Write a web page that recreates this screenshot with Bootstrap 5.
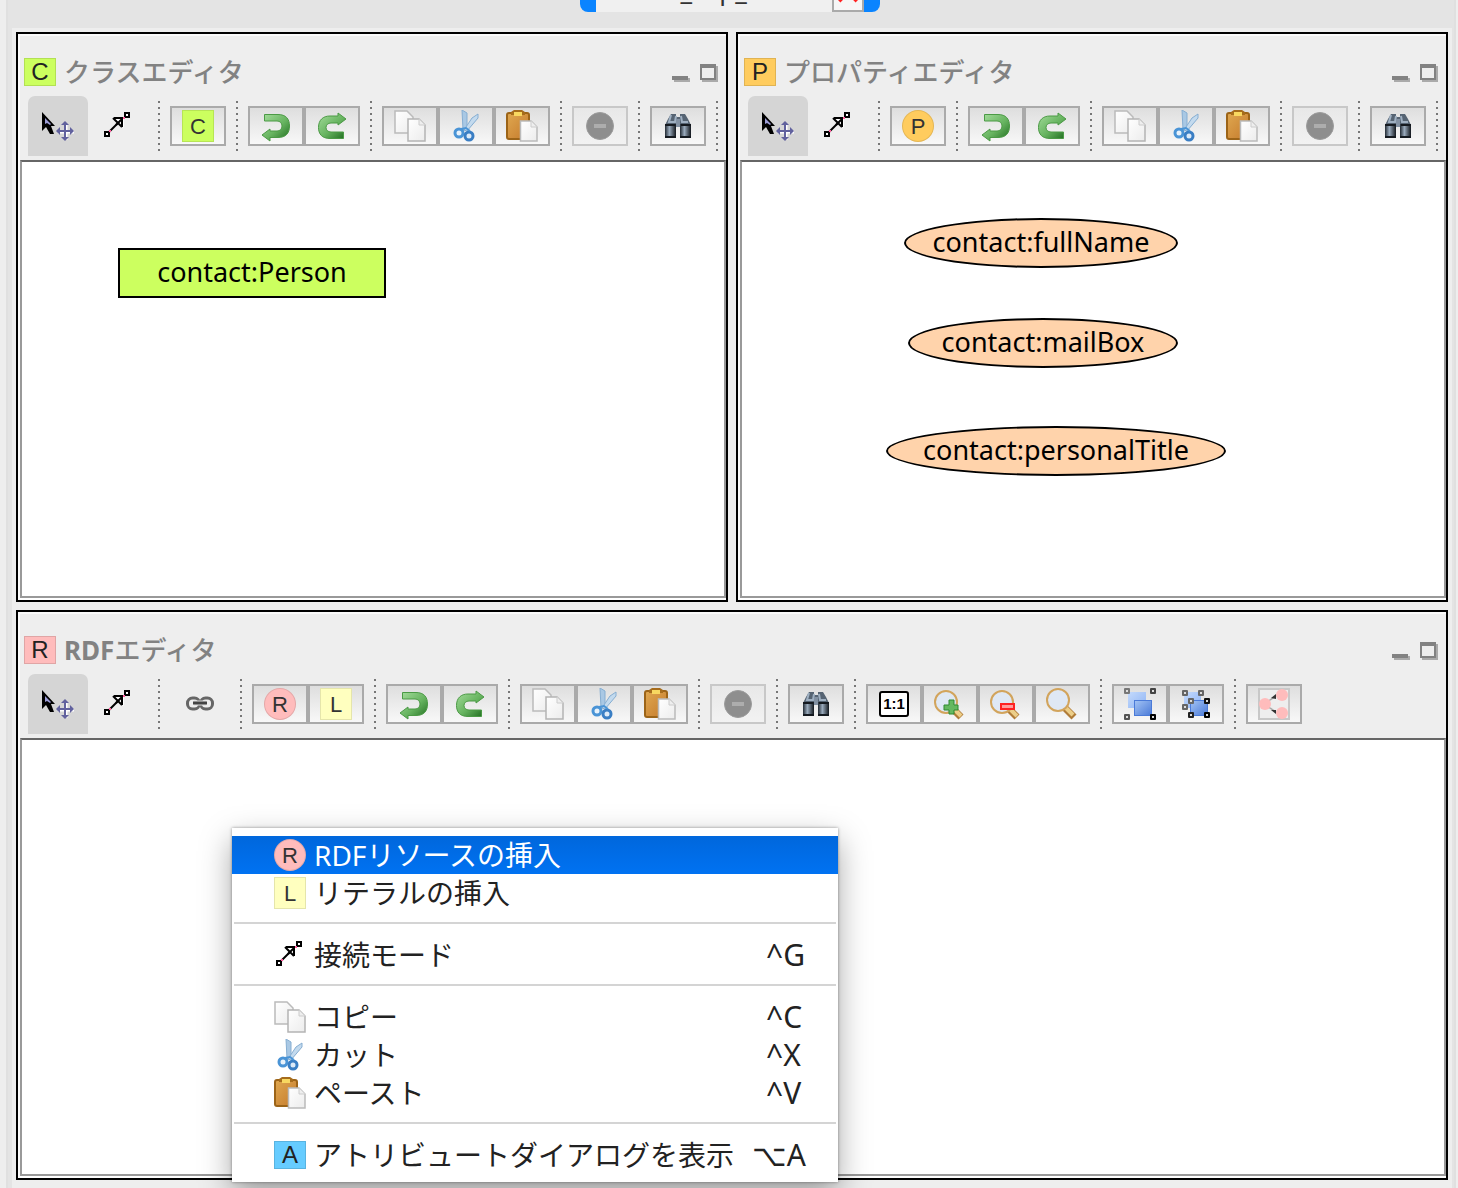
<!DOCTYPE html>
<html lang="ja">
<head>
<meta charset="utf-8">
<meta name="viewport" content="width=device-width, initial-scale=1">
<title>RDFエディタ</title>
<link href="https://cdn.jsdelivr.net/npm/bootstrap@5.3.0/dist/css/bootstrap.min.css" rel="stylesheet">
<style>
  body { background: #eee; font-family: "Noto Sans", "Noto Sans CJK JP", sans-serif; color: #000; overflow: hidden; }
  .desk { margin: 0 2px 0 6px; border: solid #e0e0e0; border-width: 0 2px; padding: 0 2px 0 4px; background: #e4e4e4; }
  .desk-top { height: 28px; padding-right: 4px; }
  .doc-tab { height: 40px; margin-top: -28px; width: 300px; background: #f0f0f0; border-radius: 8px; overflow: hidden; font-size: 26px; line-height: 36px; color: #333; }
  .tab-cap { width: 16px; background: #0a84ff; }
  .tab-close { width: 32px; border: 2px solid #aaa; background: #f6f6f6; }
  .desk-body { background: #eee; padding: 4px 4px 8px; gap: 8px; }
  .pane-row { gap: 8px; flex: 1 1 0; }
  .pane { border: 2px solid #000; background: #eee; box-shadow: inset 2px 2px 0 #fafafa, inset 0 -2px 0 #fff; flex: 1 1 0; min-width: 0; }
  .pane-head { height: 62px; padding: 14px 8px 0 6px; }
  .pane-title { font-size: 26px; line-height: 32px; font-weight: 700; color: #828282; padding-left: 8px; }
  .jp-title { font-weight: 500; }
  .win-btns { gap: 10px; padding-top: 2px; }
  .win-btns button { border: 0; background: none; padding: 0; line-height: 0; }
  .tag { display: inline-block; width: 32px; height: 28px; font: 24px/26px "Liberation Sans", sans-serif; text-align: center; border: 1px solid rgba(0,0,0,.12); color: #222; }
  .tag-tall { height: 32px; font-size: 22px; line-height: 32px; color: #333; border-color: rgba(0,0,0,.1); }
  .tag-c { background: #ccff5f; } .tag-p { background: #ffcc5e; } .tag-r { background: #ffbcbc; } .tag-l { background: #ffffbf; } .tag-a { background: #66ccff; }
  .tag-one { display: inline-block; width: 30px; height: 26px; border: 2px solid #000; border-radius: 3px; background: #fff; font: 700 15px/22px "Liberation Sans", sans-serif; text-align: center; color: #000; }
  .tool-bar { height: 64px; padding: 0 0 4px 10px; border: 0; }
  .tool { width: 56px; height: 40px; padding: 0; border: 2px solid #aaa; border-radius: 0; background: linear-gradient(#dedede, #f8f8f8); display: flex; align-items: center; justify-content: center; }
  .tool:disabled { border-color: #c8c8c8; background: linear-gradient(#e8e8e8, #f2f2f2); opacity: 1; }
  .tool-flat { width: 60px; height: 60px; border: 0; background: none; }
  .tool-flat.active { background: #d5d5d5; border-radius: 7px 7px 0 0; }
  .tool-sep { width: 2px; height: 50px; margin: 0 10px; background: repeating-linear-gradient(#777 0 2px, transparent 2px 6px); }
  .board { background: #fff; border: 2px solid #999; border-top-color: #666; margin: 0 0 2px 2px; }
  .node { position: absolute; height: 50px; line-height: 44px; font-size: 27px; text-align: center; border: 2px solid #000; white-space: nowrap; }
  .node-class { background: #ccff5f; }
  .node-prop { background: #ffd3ab; border-radius: 50%; }
  .ctx { position: absolute; left: 210px; top: 88px; width: 606px; padding: 8px 0; border: 0; border-radius: 0; box-shadow: 0 0 3px rgba(0,0,0,.4), 0 12px 30px rgba(0,0,0,.35); font-size: 28px; color: #000; }
  .ctx .dropdown-item { height: 38px; padding: 0 32px 0 42px; gap: 8px; line-height: 38px; color: #222; font-weight: 400; }
  .ctx .dropdown-item.active { color: #fff; background: linear-gradient(#0067dc, #0072f2); }
  .ctx .dropdown-divider { margin: 10px 2px 12px; border-top: 2px solid #d4d4d4; opacity: 1; }
  .keys { min-width: 40px; font-size: 30px; }
  .keys, .ctx .word { white-space: nowrap; }
</style>
<script src="https://cdn.jsdelivr.net/npm/bootstrap@5.3.0/dist/js/bootstrap.bundle.min.js"></script>
</head>
<body>
<svg width="0" height="0" class="position-absolute" aria-hidden="true">
  <defs>
    <linearGradient id="green" x1="0" y1="0" x2="1" y2="1"><stop offset="0" stop-color="#a5dd9c"/><stop offset=".55" stop-color="#66b35f"/><stop offset="1" stop-color="#1e6b1e"/></linearGradient>
    <linearGradient id="paper" x1="0" y1="0" x2="1" y2="1"><stop offset="0" stop-color="#fff"/><stop offset="1" stop-color="#ececec"/></linearGradient>
    <linearGradient id="wood" x1="0" y1="0" x2="1" y2="1"><stop offset="0" stop-color="#e0a850"/><stop offset="1" stop-color="#c47a2c"/></linearGradient>
    <linearGradient id="blueA" x1="0" y1="0" x2="1" y2="1"><stop offset="0" stop-color="#c4dafc"/><stop offset="1" stop-color="#8fb4f4"/></linearGradient>
    <linearGradient id="blueB" x1="0" y1="0" x2="1" y2="1"><stop offset="0" stop-color="#a4c4f4"/><stop offset="1" stop-color="#4a7ad8"/></linearGradient>
    <linearGradient id="steel" x1="0" y1="0" x2="1" y2="0"><stop offset="0" stop-color="#222a33"/><stop offset=".4" stop-color="#9aabbd"/><stop offset="1" stop-color="#11161c"/></linearGradient>
    <g id="dot"><rect x="-3" y="-3" width="6" height="6" rx="1"/><rect x="-1" y="-1" width="2" height="2" fill="#ddd"/></g>
  </defs>
  <symbol id="i-select" viewBox="0 0 32 32"><path d="M0 2V21L4 17L8 24H12L9 16H13Z" fill="#000"/><path d="M3 8V14L5 13L8 15L9 14Z" fill="#9c9cd6"/><path d="M24 14V30M16 22H32" stroke="#fff" stroke-width="3"/><path d="M23 13V29M15 21H31" stroke="#62629e" stroke-width="2"/><path d="M19 15L23 11L27 15ZM19 27L23 31L27 27ZM18 17L14 21L18 25ZM28 17L32 21L28 25Z" fill="#62629e"/></symbol>
  <symbol id="i-connect" viewBox="0 0 32 32"><path d="M7 22L20 9" stroke="#000" stroke-width="2"/><path d="M12 7H22V18L19 15L15 11Z" fill="#fff"/><path d="M12 8H20V17M11 8L20 17M14 15L20 9" fill="none" stroke="#000" stroke-width="2"/><path d="M3 22H7V26H3ZM23 3H27V7H23Z" fill="#fff" stroke="#000" stroke-width="2"/><path d="M7 20h2v2H7zM21 7h2v2h-2z" fill="#ff5c9c"/></symbol>
  <symbol id="i-undo" viewBox="0 0 32 32"><path d="M4.500 4.500H18C26 4.500 29.500 9 29.500 16C29.500 23 26 27.500 18 27.500H10V31L2 25L10 19V21H17C20 21 22 19 22 16C22 13 20 11 17 11H4.500Z" fill="url(#green)" stroke="#4b9a45"/></symbol>
  <symbol id="i-redo" viewBox="0 0 32 32"><path d="M27.500 28.500H14C6 28.500 2.500 24 2.500 17.500C2.500 10 7 6 14 6H22V3L30 9L22 15V13H15C12 13 10 15 10 17.500C10 20 12 22 15 22H27.500Z" fill="url(#green)" stroke="#4b9a45"/></symbol>
  <symbol id="i-copy" viewBox="0 0 32 32"><path d="M1 1H13L19 7V23H1Z" fill="url(#paper)" stroke="#bbb" stroke-width="1.500"/><path d="M14 9H25L31 15V31H14Z" fill="url(#paper)" stroke="#b4b4b4" stroke-width="1.500"/><path d="M25 9V15H31" fill="#eee" stroke="#ccc"/></symbol>
  <symbol id="i-cut" viewBox="0 0 32 32"><path d="M12 0L17 3V20H13Z" fill="#a9c8e4" stroke="#86aed2"/><path d="M28 4V8L17 21L14 20L22 8Z" fill="#c3daee" stroke="#86aed2"/><circle cx="9" cy="23" r="4" fill="#e8f2fb" stroke="#4a94d6" stroke-width="3"/><circle cx="19" cy="26" r="4" fill="#dceaf8" stroke="#3a7ec4" stroke-width="3"/><path d="M11 19L16 18L20 21" stroke="#4a94d6" stroke-width="2" fill="none"/></symbol>
  <symbol id="i-paste" viewBox="0 0 32 32"><rect x="1" y="3" width="22" height="26" rx="2" fill="url(#wood)" stroke="#9c6418" stroke-width="2"/><path d="M5 5V2L8 0H16L19 2V5Z" fill="#a66c1c"/><path d="M8 2H16V6H8Z" fill="#f8d860"/><path d="M14.500 11H25L31 17V31H14.500Z" fill="url(#paper)" stroke="#bbb" stroke-width="1.500"/><path d="M25 11V17H31" fill="#eee" stroke="#ccc"/></symbol>
  <symbol id="i-minus" viewBox="0 0 32 32"><circle cx="16" cy="16" r="13.500" fill="#8e8e8e" stroke="#9c9c9c"/><path d="M10 14H22V18H10Z" fill="#adadad"/></symbol>
  <symbol id="i-find" viewBox="0 0 32 32"><path d="M9 4H14V7H18V4H23L26 9L29 15H3L6 9Z" fill="#566473"/><path d="M9 5L7 12H13L14 6M19 6L20 12H26" stroke="#9fb0c2" stroke-width="2" fill="none"/><rect x="3" y="14" width="11" height="14" fill="url(#steel)"/><rect x="18" y="14" width="11" height="14" fill="url(#steel)"/><rect x="14" y="9" width="4" height="8" fill="#8291a3"/><path d="M3 26H14V28H3ZM18 26H29V28H18ZM3 14H13V16H3ZM19 14H29V16H19Z" fill="#151a20"/></symbol>
  <symbol id="i-zin" viewBox="0 0 32 32"><path d="M19 21L27 29" stroke="#b07c38" stroke-width="7"/><path d="M19 20L27 28" stroke="#ecce88" stroke-width="4"/><circle cx="12" cy="14" r="11" fill="#dfe8f4" stroke="#d2a45c" stroke-width="2"/><path d="M15 12H20V17H24V22H20V26H15V22H10V17H15Z" fill="#64b860" stroke="#2e8a30"/></symbol>
  <symbol id="i-zout" viewBox="0 0 32 32"><path d="M19 21L27 29" stroke="#b07c38" stroke-width="7"/><path d="M19 20L27 28" stroke="#ecce88" stroke-width="4"/><circle cx="12" cy="14" r="11" fill="#dfe8f4" stroke="#d2a45c" stroke-width="2"/><rect x="11" y="16" width="13" height="5" fill="#ff9c9c" stroke="#f22" stroke-width="2"/></symbol>
  <symbol id="i-zoom" viewBox="0 0 32 32"><path d="M19 20L28 29" stroke="#b07c38" stroke-width="7"/><path d="M19 19L27 27" stroke="#ecce88" stroke-width="4"/><circle cx="12" cy="12" r="11" fill="#dfe8f4" stroke="#d2a45c" stroke-width="2"/></symbol>
  <symbol id="i-group" viewBox="0 0 32 32"><rect x="4" y="4" width="18" height="16" fill="url(#blueA)"/><rect x="10.500" y="12.500" width="17" height="15" fill="url(#blueB)" stroke="#4a7ad8"/><use href="#dot" x="3" y="3" fill="#777"/><use href="#dot" x="29" y="3" fill="#444"/><use href="#dot" x="3" y="29" fill="#555"/><use href="#dot" x="29" y="29"/></symbol>
  <symbol id="i-ungroup" viewBox="0 0 32 32"><rect x="4" y="4" width="17" height="16" fill="url(#blueA)"/><rect x="10.500" y="12.500" width="17" height="15" fill="url(#blueB)" stroke="#4a7ad8"/><g fill="#666"><use href="#dot" x="5" y="5"/><use href="#dot" x="21" y="5"/><use href="#dot" x="5" y="19"/><use href="#dot" x="11" y="13"/></g><use href="#dot" x="27" y="13" fill="#111"/><use href="#dot" x="11" y="27" fill="#222"/><use href="#dot" x="27" y="27"/></symbol>
  <symbol id="i-graph" viewBox="0 0 32 32"><rect x="1" y="1" width="30" height="30" fill="#eee" stroke="#c8c8c8" stroke-width="2"/><path d="M9 14L18 8M9 18L18 24" stroke="#aaa" stroke-width="1.500"/><path d="M18 6V11L13 10ZM18 26V22L13 22Z" fill="#333"/><g fill="#ffbcbc"><circle cx="7" cy="16" r="6"/><circle cx="24" cy="7" r="6"/><circle cx="24" cy="25" r="6"/></g></symbol>
  <symbol id="i-link" viewBox="0 0 32 32"><g fill="none" stroke="#666" stroke-width="3"><rect x="3.500" y="10" width="12" height="11" rx="5"/><rect x="16.500" y="10" width="12" height="11" rx="5"/></g><path d="M10 15H22" stroke="#ddd" stroke-width="5"/><path d="M9 15H23" stroke="#444" stroke-width="3"/></symbol>
  <symbol id="i-min" viewBox="0 0 18 18"><path d="M2 14H18V18H2Z" fill="#aaa"/><path d="M0 12H16V16H0Z" fill="#828282"/></symbol>
  <symbol id="i-max" viewBox="0 0 18 18"><path d="M4 16H16V2H18V18H2V16Z" fill="#aaa"/><path fill-rule="evenodd" d="M0 0H16V16H0ZM2 4V14H14V4Z" fill="#828282"/></symbol>
</svg>

<div class="desk vh-100 d-flex flex-column">
  <header class="desk-top d-flex justify-content-center align-items-start overflow-hidden">
    <div class="doc-tab d-flex">
      <span class="tab-cap"></span>
      <span class="flex-grow-1 ps-1">screen_cap_02</span>
      <button class="tab-close p-0" aria-label="閉じる"><svg width="28" height="36" viewBox="0 0 28 36" class="d-block"><path d="M5 9L23 27M23 9L5 27" stroke="#f22" stroke-width="4"/></svg></button>
      <span class="tab-cap"></span>
    </div>
  </header>

  <main class="desk-body flex-grow-1 d-flex flex-column">
    <div class="pane-row d-flex">
      <section class="pane d-flex flex-column">
        <div class="pane-head d-flex align-items-center">
          <span class="tag tag-c">C</span>
          <h2 class="pane-title jp-title m-0 me-auto">クラスエディタ</h2>
          <div class="win-btns d-flex"><button aria-label="最小化"><svg width="18" height="18"><use href="#i-min"/></svg></button><button aria-label="最大化"><svg width="18" height="18"><use href="#i-max"/></svg></button></div>
        </div>
        <div class="tool-bar d-flex align-items-center" role="toolbar">
          <button class="tool tool-flat active" aria-label="選択"><svg width="32" height="32"><use href="#i-select"/></svg></button>
          <button class="tool tool-flat" aria-label="接続"><svg width="32" height="32"><use href="#i-connect"/></svg></button>
          <span class="tool-sep"></span>
          <button class="tool"><span class="tag tag-tall tag-c">C</span></button>
          <span class="tool-sep"></span>
          <button class="tool" aria-label="元に戻す"><svg width="32" height="32"><use href="#i-undo"/></svg></button>
          <button class="tool" aria-label="やり直し"><svg width="32" height="32"><use href="#i-redo"/></svg></button>
          <span class="tool-sep"></span>
          <button class="tool" aria-label="コピー"><svg width="32" height="32"><use href="#i-copy"/></svg></button>
          <button class="tool" aria-label="カット"><svg width="32" height="32"><use href="#i-cut"/></svg></button>
          <button class="tool" aria-label="ペースト"><svg width="32" height="32"><use href="#i-paste"/></svg></button>
          <span class="tool-sep"></span>
          <button class="tool" aria-label="削除" disabled><svg width="32" height="32"><use href="#i-minus"/></svg></button>
          <span class="tool-sep"></span>
          <button class="tool" aria-label="検索"><svg width="32" height="32"><use href="#i-find"/></svg></button>
          <span class="tool-sep me-0"></span>
        </div>
        <div class="board position-relative flex-grow-1">
          <div class="node node-class" style="left:96px;top:86px;width:268px">contact:Person</div>
        </div>
      </section>

      <section class="pane d-flex flex-column">
        <div class="pane-head d-flex align-items-center">
          <span class="tag tag-p">P</span>
          <h2 class="pane-title jp-title m-0 me-auto">プロパティエディタ</h2>
          <div class="win-btns d-flex"><button aria-label="最小化"><svg width="18" height="18"><use href="#i-min"/></svg></button><button aria-label="最大化"><svg width="18" height="18"><use href="#i-max"/></svg></button></div>
        </div>
        <div class="tool-bar d-flex align-items-center" role="toolbar">
          <button class="tool tool-flat active" aria-label="選択"><svg width="32" height="32"><use href="#i-select"/></svg></button>
          <button class="tool tool-flat" aria-label="接続"><svg width="32" height="32"><use href="#i-connect"/></svg></button>
          <span class="tool-sep"></span>
          <button class="tool"><span class="tag tag-tall tag-p rounded-circle">P</span></button>
          <span class="tool-sep"></span>
          <button class="tool" aria-label="元に戻す"><svg width="32" height="32"><use href="#i-undo"/></svg></button>
          <button class="tool" aria-label="やり直し"><svg width="32" height="32"><use href="#i-redo"/></svg></button>
          <span class="tool-sep"></span>
          <button class="tool" aria-label="コピー"><svg width="32" height="32"><use href="#i-copy"/></svg></button>
          <button class="tool" aria-label="カット"><svg width="32" height="32"><use href="#i-cut"/></svg></button>
          <button class="tool" aria-label="ペースト"><svg width="32" height="32"><use href="#i-paste"/></svg></button>
          <span class="tool-sep"></span>
          <button class="tool" aria-label="削除" disabled><svg width="32" height="32"><use href="#i-minus"/></svg></button>
          <span class="tool-sep"></span>
          <button class="tool" aria-label="検索"><svg width="32" height="32"><use href="#i-find"/></svg></button>
          <span class="tool-sep me-0"></span>
        </div>
        <div class="board position-relative flex-grow-1">
          <div class="node node-prop" style="left:162px;top:56px;width:274px">contact:fullName</div>
          <div class="node node-prop" style="left:166px;top:156px;width:270px">contact:mailBox</div>
          <div class="node node-prop" style="left:144px;top:264px;width:340px">contact:personalTitle</div>
        </div>
      </section>
    </div>

    <div class="pane-row d-flex">
      <section class="pane d-flex flex-column">
        <div class="pane-head d-flex align-items-center">
          <span class="tag tag-r">R</span>
          <h2 class="pane-title m-0 me-auto">RDF<span class="jp-title">エディタ</span></h2>
          <div class="win-btns d-flex"><button aria-label="最小化"><svg width="18" height="18"><use href="#i-min"/></svg></button><button aria-label="最大化"><svg width="18" height="18"><use href="#i-max"/></svg></button></div>
        </div>
        <div class="tool-bar d-flex align-items-center" role="toolbar">
          <button class="tool tool-flat active" aria-label="選択"><svg width="32" height="32"><use href="#i-select"/></svg></button>
          <button class="tool tool-flat" aria-label="接続"><svg width="32" height="32"><use href="#i-connect"/></svg></button>
          <span class="tool-sep"></span>
          <button class="tool tool-flat" aria-label="リンク"><svg width="32" height="32"><use href="#i-link"/></svg></button>
          <span class="tool-sep"></span>
          <button class="tool"><span class="tag tag-tall tag-r rounded-circle">R</span></button>
          <button class="tool"><span class="tag tag-tall tag-l">L</span></button>
          <span class="tool-sep"></span>
          <button class="tool" aria-label="元に戻す"><svg width="32" height="32"><use href="#i-undo"/></svg></button>
          <button class="tool" aria-label="やり直し"><svg width="32" height="32"><use href="#i-redo"/></svg></button>
          <span class="tool-sep"></span>
          <button class="tool" aria-label="コピー"><svg width="32" height="32"><use href="#i-copy"/></svg></button>
          <button class="tool" aria-label="カット"><svg width="32" height="32"><use href="#i-cut"/></svg></button>
          <button class="tool" aria-label="ペースト"><svg width="32" height="32"><use href="#i-paste"/></svg></button>
          <span class="tool-sep"></span>
          <button class="tool" aria-label="削除" disabled><svg width="32" height="32"><use href="#i-minus"/></svg></button>
          <span class="tool-sep"></span>
          <button class="tool" aria-label="検索"><svg width="32" height="32"><use href="#i-find"/></svg></button>
          <span class="tool-sep"></span>
          <button class="tool"><span class="tag-one">1:1</span></button>
          <button class="tool" aria-label="拡大"><svg width="32" height="32"><use href="#i-zin"/></svg></button>
          <button class="tool" aria-label="縮小"><svg width="32" height="32"><use href="#i-zout"/></svg></button>
          <button class="tool" aria-label="全体表示"><svg width="32" height="32"><use href="#i-zoom"/></svg></button>
          <span class="tool-sep"></span>
          <button class="tool" aria-label="グループ化"><svg width="32" height="32"><use href="#i-group"/></svg></button>
          <button class="tool" aria-label="グループ解除"><svg width="32" height="32"><use href="#i-ungroup"/></svg></button>
          <span class="tool-sep"></span>
          <button class="tool" aria-label="グラフ"><svg width="32" height="32"><use href="#i-graph"/></svg></button>
        </div>
        <div class="board position-relative flex-grow-1">
          <div class="ctx dropdown-menu show" role="menu">
            <button class="dropdown-item active d-flex align-items-center" role="menuitem"><span class="tag tag-tall tag-r rounded-circle">R</span><span class="word me-auto">RDFリソースの挿入</span></button>
            <button class="dropdown-item d-flex align-items-center" role="menuitem"><span class="tag tag-tall tag-l">L</span><span class="word me-auto">リテラルの挿入</span></button>
            <hr class="dropdown-divider">
            <button class="dropdown-item d-flex align-items-center" role="menuitem"><svg width="32" height="32"><use href="#i-connect"/></svg><span class="word me-auto">接続モード</span><span class="keys">^G</span></button>
            <hr class="dropdown-divider">
            <button class="dropdown-item d-flex align-items-center" role="menuitem"><svg width="32" height="32"><use href="#i-copy"/></svg><span class="word me-auto">コピー</span><span class="keys">^C</span></button>
            <button class="dropdown-item d-flex align-items-center" role="menuitem"><svg width="32" height="32"><use href="#i-cut"/></svg><span class="word me-auto">カット</span><span class="keys">^X</span></button>
            <button class="dropdown-item d-flex align-items-center" role="menuitem"><svg width="32" height="32"><use href="#i-paste"/></svg><span class="word me-auto">ペースト</span><span class="keys">^V</span></button>
            <hr class="dropdown-divider">
            <button class="dropdown-item d-flex align-items-center" role="menuitem"><span class="tag tag-a">A</span><span class="word me-auto">アトリビュートダイアログを表示</span><span class="keys">⌥A</span></button>
          </div>
        </div>
      </section>
    </div>
  </main>
</div>
</body>
</html>
